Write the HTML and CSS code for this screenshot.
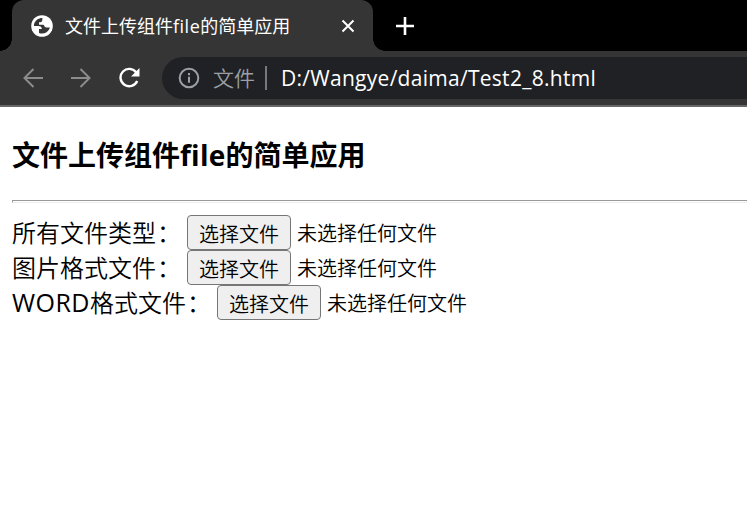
FILE: index.html
```html
<!DOCTYPE html>
<html lang="zh-CN">
<head>
<meta charset="utf-8">
<title>文件上传组件file的简单应用</title>
<link rel="stylesheet" href="styles.css">
</head>
<body>
<header class="browser">
  <div class="tabs">
    <div class="tab">
      <svg class="globe" viewBox="0 0 22 22"><circle cx="11" cy="11" r="10.8" fill="#fff"/><path d="M11.500 3C8 2.800 4.300 5 3.100 9c-.2.700-.2 1.300-.1 2H7.500c2 0 3.300 1 3.300 3H8v3.900c3.700 1.600 8.300.1 10.200-3.600.3-.6.5-1.200.6-1.800h-3.300c-1.500 0-1.800-.8-2.200-1.700-.3-.8-.9-1.100-1.900-1.100H8V7.200h1.300c1.300 0 1.800-.6 1.900-1.700.1-1 .1-1.500.3-2.500Z" fill="#353535"/></svg>
      <span class="tab-title">文件上传组件<span class="latin">file</span>的简单应用</span>
      <svg class="close" viewBox="0 0 14 14"><path d="m1.500 1.500 11 11m0-11-11 11"/></svg>
    </div>
    <svg class="plus" viewBox="0 0 18 18"><path d="M9 0v18M0 9h18"/></svg>
  </div>
  <div class="toolbar">
    <svg class="nav" viewBox="0 0 20 20"><path d="M20 10H1.500M10.500 1 1.500 10l9 9"/></svg>
    <svg class="nav" viewBox="0 0 20 20"><path d="M0 10h18.500M9.500 1l9 9-9 9"/></svg>
    <svg class="reload" viewBox="0 0 22 22"><path d="M17.300 5.500A8.700 8.700 0 1 0 18.200 14" fill="none" stroke="#fff" stroke-width="2.400"/><path d="M20.500 1v8.500H12Z" fill="#fff"/></svg>
    <div class="address">
      <svg class="info" viewBox="0 0 22 22"><circle cx="11" cy="11" r="9.300"/><path d="M11 9.800v6M11 6v2.200"/></svg>
      <span class="scheme">文件</span>
      <span class="divider"></span>
      <span class="url">D:/Wangye/daima/Test2_8.html</span>
    </div>
  </div>
</header>
<main class="page">
  <h3>文件上传组件<span class="latin">file</span>的简单应用</h3>
  <hr>
  <form>
    <div class="row"><span class="label">所有文件类型<span class="colon">：</span></span><button type="button">选择文件</button><span class="status">未选择任何文件</span></div>
    <div class="row"><span class="label">图片格式文件<span class="colon">：</span></span><button type="button">选择文件</button><span class="status">未选择任何文件</span></div>
    <div class="row"><span class="label"><span class="latin">WORD</span>格式文件<span class="colon">：</span></span><button type="button">选择文件</button><span class="status">未选择任何文件</span></div>
  </form>
</main>
</body>
</html>
```
FILE: styles.css
```css
* { box-sizing: border-box; }
body {
  margin: 0;
  background: #fff;
  color: #000;
  font-family: "Open Sans", "Noto Sans CJK SC", sans-serif;
  font-weight: 350;
  overflow: hidden;
}
svg { display: block; flex: none; }
.tabs { display: flex; height: 51px; background: #000; }
.tab {
  position: relative;
  display: flex;
  align-items: center;
  width: 361px;
  margin-left: 12px;
  padding: 0 18px 0 19px;
  border-radius: 12px 12px 0 0;
  background: #353535;
}
.tab::before, .tab::after {
  content: "";
  position: absolute;
  bottom: 0;
  width: 12px;
  height: 12px;
}
.tab::before { left: -12px; background: radial-gradient(circle at 0 0, transparent 11.5px, #353535 12px); }
.tab::after { right: -12px; background: radial-gradient(circle at 100% 0, transparent 11.5px, #353535 12px); }
.globe { width: 22px; height: 22px; }
.tab-title {
  margin-left: 12px;
  font-size: 18px;
  font-weight: 400;
  line-height: 26px;
  color: #fff;
  white-space: nowrap;
}
.latin { font-weight: 400; }
.tab-title .latin { letter-spacing: .5px; }
.close { width: 14px; height: 14px; margin-left: auto; fill: none; stroke: #fff; stroke-width: 2; }
.plus { width: 18px; height: 18px; margin: 17px 0 0 23px; fill: none; stroke: #fff; stroke-width: 2.6; }
.toolbar {
  display: flex;
  align-items: center;
  height: 56px;
  padding: 0 0 2px 23px;
  border-bottom: 2px solid #666;
  background: #353535;
}
.nav { width: 20px; height: 20px; margin: 1px 28px 0 0; fill: none; stroke: #8c8c8c; stroke-width: 2; }
.reload { width: 22px; height: 22px; margin: 1px 21px 0 0; }
.address {
  display: flex;
  align-items: center;
  flex: 1;
  height: 42px;
  margin-top: 2px;
  padding-left: 16px;
  border-radius: 21px 0 0 21px;
  background: #202124;
  font-size: 21px;
  line-height: 30px;
}
.info { width: 22px; height: 22px; fill: none; stroke: #9aa0a6; stroke-width: 2; }
.scheme { width: 42px; margin-left: 13px; color: #9aa0a6; }
.divider { width: 2px; height: 24px; margin: 0 14px 0 10px; background: #77797d; }
.url { color: #fff; font-weight: 500; letter-spacing: .28px; white-space: nowrap; }
.page { padding: 0 0 0 12px; }
h3 { margin: 0; padding-top: 27px; font-size: 28px; line-height: 42px; height: 93px; white-space: nowrap; }
h3 .latin { font-weight: 700; letter-spacing: .25px; }
hr { margin: 0 0 12px; height: 3px; border: 1px solid #999; border-right: 0; border-bottom-color: #eee; }
.row { display: flex; height: 35px; align-items: center; white-space: nowrap; }
.label { margin-right: 7px; font-size: 24px; line-height: 35px; }
.label .latin { font-size: 25px; letter-spacing: .45px; }
.colon { display: inline-block; width: 24px; text-indent: 1px; }
button {
  width: 104px;
  height: 35px;
  padding: 2px 0 0;
  border: 1.5px solid #767676;
  border-radius: 4px;
  background: #efefef;
  color: #000;
  font: 350 20px/30px "Noto Sans CJK SC", sans-serif;
}
.status { margin-left: 6px; padding-top: 3px; font-size: 20px; line-height: 32px; }
```
